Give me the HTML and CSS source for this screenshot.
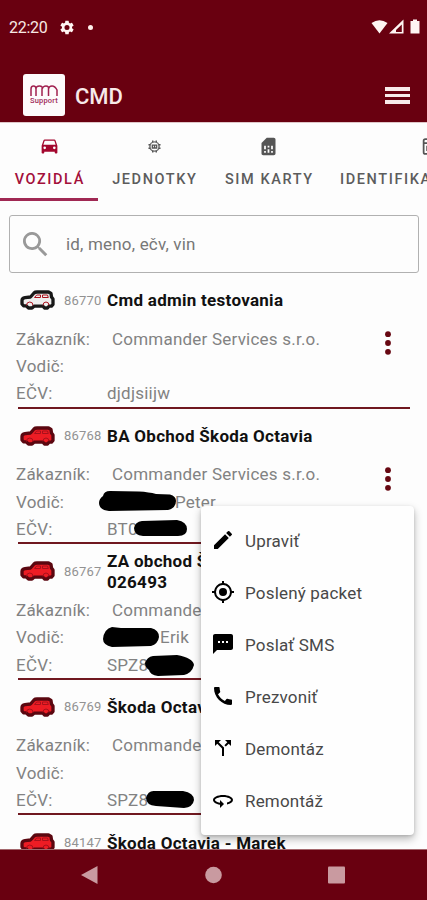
FILE: index.html
```html
<!DOCTYPE html>
<html lang="sk">
<head>
<meta charset="utf-8">
<title>CMD</title>
<link rel="stylesheet" href="styles.css">
</head>
<body>
<svg class="defs" width="0" height="0">
  <symbol id="car" viewBox="0 0 35 20">
    <path d="M2 10.500Q2 8.200 5 7.700L10.500 7 14 3Q15 2 17 2H28.500L31 3.500 31.500 7 33 9V14.500L31.500 16.200H29L27.500 18H24.500L23 16.200H14L12 18H8.500L6 15.800H3.500L2 14Z" stroke-width="3.300" stroke-linejoin="round"/>
    <path class="detail" d="M14.500 7.500 16.700 5H20.500V7.500ZM22.500 5H27.500L28.300 7.500H22.500ZM6.500 15.500Q6.500 12 9.800 12T13 15.500M23 15.500Q23 12 26 12T29 15.500" fill="none" stroke-width="1"/>
  </symbol>
  <symbol id="dots" viewBox="0 0 8 26"><circle cx="4" cy="4.200" r="2.900"/><circle cx="4" cy="13" r="2.900"/><circle cx="4" cy="21.800" r="2.900"/></symbol>
</svg>
<div class="screen">
  <div class="status">
    <span class="clock">22:20</span>
    <svg class="gear" viewBox="2 2 20 20"><path fill-rule="evenodd" d="M19.140 12.940c.040-.300.060-.610.060-.940s-.020-.640-.070-.940l2.030-1.580a.49.49 0 0 0 .120-.610l-1.920-3.320a.49.49 0 0 0-.590-.220l-2.390.960a7 7 0 0 0-1.620-.940l-.360-2.540a.48.48 0 0 0-.480-.410h-3.840c-.240 0-.430.170-.470.410l-.360 2.540c-.590.240-1.130.570-1.620.940l-2.390-.960a.48.48 0 0 0-.590.220L2.740 8.870c-.120.210-.080.470.120.610l2.030 1.580c-.050.300-.090.630-.090.940s.020.640.070.940l-2.030 1.580a.49.49 0 0 0-.120.610l1.920 3.320c.120.220.370.290.590.220l2.390-.960c.500.380 1.030.700 1.620.940l.360 2.540c.050.240.240.410.480.410h3.840c.240 0 .440-.170.470-.410l.360-2.540a7 7 0 0 0 1.620-.940l2.390.960c.220.080.470 0 .590-.220l1.920-3.320a.49.49 0 0 0-.120-.610zM12 15.600a3.600 3.600 0 1 1 0-7.200 3.600 3.600 0 0 1 0 7.200z"/></svg>
    <i class="dot"></i>
    <svg class="signals" viewBox="0 0 50 16"><path d="M.5 4Q8.500 -1.500 16.500 4L8.500 14.500Z"/><path fill-rule="evenodd" d="M18 14.500 32.500 .500V14.500ZM25 13H30.800V5.500L25 11Z"/><path d="M39.500 2H42V.500H46V2H48.500V14.500H39.500Z"/></svg>
  </div>
  <header class="bar">
    <div class="logo">
      <svg viewBox="0 0 30 13"><path d="M2 12V5Q2 2 4.500 2T7 5V12M7 5Q7 2 10.500 2T13 5V12M13 5Q14 2 17 2T19.500 5V12M19.500 5Q20 2 23 2T28 6V12"/></svg>
      <span>Support</span>
    </div>
    <h1>CMD</h1>
    <div class="burger"><i></i><i></i><i></i></div>
  </header>
  <nav class="tabs">
    <div class="tab active"><svg viewBox="0 0 24 24"><path fill-rule="evenodd" d="M18.920 5.010C18.720 4.420 18.160 4 17.500 4h-11c-.660 0-1.210.420-1.420 1.010L3 11v8c0 .550.450 1 1 1h1c.550 0 1-.450 1-1v-1h12v1c0 .550.450 1 1 1h1c.550 0 1-.450 1-1v-8zM6.500 15a1.500 1.500 0 1 1 0-3 1.500 1.500 0 0 1 0 3zm11 0a1.500 1.500 0 1 1 0-3 1.500 1.500 0 0 1 0 3zM5 10l1.500-4.500h11L19 10z"/></svg><span>VOZIDLÁ</span></div>
    <div class="tab units"><svg viewBox="0 0 24 24"><circle cx="12" cy="12" r="6.500" fill="none" stroke="#666" stroke-width="2"/><path d="M8.500 3.500h2V6h-2zm5 0h2V6h-2zM8.500 18h2v2.500h-2zm5 0h2v2.500h-2zM3.500 8.500H6v2H3.500zm0 5H6v2H3.500zM18 8.500h2.500v2H18zm0 5h2.500v2H18z"/><path fill-rule="evenodd" d="M8 9h8v6H8zM10 10.800v2.400h1.200v-2.400zm3 0v2.400h1.200v-2.400z"/></svg><span>JEDNOTKY</span></div>
    <div class="tab sim"><svg viewBox="0 0 24 24"><path fill-rule="evenodd" d="M18 2h-8L4 8v12c0 1.100.900 2 2 2h12c1.100 0 2-.900 2-2V4c0-1.100-.900-2-2-2zM7 11h2v4H7zm0 6h2v2H7zm4-6h2v2h-2zm0 4h2v4h-2zm4-4h2v4h-2zm0 6h2v2h-2z"/></svg><span>SIM KARTY</span></div>
    <div class="tab ids"><svg viewBox="0 0 24 24"><path d="M5 3.500h14q2 0 2 2v13q0 2-2 2H5q-2 0-2-2v-13q0-2 2-2zM3 8h18M7 12h5v4H7z" fill="none" stroke="#555" stroke-width="2"/></svg><span>IDENTIFIKAČNÉ</span></div>
  </nav>
  <div class="search"><svg viewBox="3 3 18 18"><path d="M15.500 14h-.790l-.280-.270A6.500 6.500 0 1 0 13.730 14.430l.270.280v.790l5 4.990L20.490 19zm-6 0a4.500 4.500 0 1 1 0-9 4.500 4.500 0 0 1 0 9z"/></svg><span>id, meno, ečv, vin</span></div>
  <main class="list">
    <section class="record">
      <div class="head"><svg class="car idle"><use href="#car"/></svg><span class="num">86770</span><b>Cmd admin testovania</b></div>
      <div class="row"><span>Zákazník:</span><span class="customer">Commander Services s.r.o.</span><svg class="more"><use href="#dots"/></svg></div>
      <div class="row"><span>Vodič:</span></div>
      <div class="row"><span>EČV:</span><span>djdjsiijw</span></div>
    </section>
    <section class="record">
      <div class="head"><svg class="car"><use href="#car"/></svg><span class="num">86768</span><b>BA Obchod Škoda Octavia</b></div>
      <div class="row"><span>Zákazník:</span><span class="customer">Commander Services s.r.o.</span><svg class="more"><use href="#dots"/></svg></div>
      <div class="row"><span>Vodič:</span><svg class="ink driver" viewBox="0 0 77 20"><path d="M4 5Q5 0 11 0L40 .500Q50 1 57 3L71 3.500Q77 5 77 10Q77 17 69 19L10 20Q0 19 0 12Q0 8 4 5Z"/></svg><span>Peter</span></div>
      <div class="row"><span>EČV:</span><span>BT0</span><svg class="ink plate-a" viewBox="0 0 53 16"><path d="M8 1 43 0Q53 2 53 9Q53 16 44 16H9Q0 15 0 8Q1 2 8 1Z"/></svg></div>
    </section>
    <section class="record">
      <div class="head"><svg class="car"><use href="#car"/></svg><span class="num">86767</span><b>ZA obchod Škoda<br>026493</b></div>
      <div class="row"><span>Zákazník:</span><span class="customer">Commander</span></div>
      <div class="row"><span>Vodič:</span><svg class="ink driver-b" viewBox="0 0 56 20"><path d="M9 0 18 1H48Q56 3 56 10Q55 17 48 19L9 20Q0 18 0 12Q1 2 9 0Z"/></svg><span>Erik</span></div>
      <div class="row"><span>EČV:</span><span>SPZ8</span><svg class="ink plate-b" viewBox="0 0 49 21"><path d="M8 1 32 0Q48 3 49 10Q47 18 39 20L13 21Q5 20 4 15Q0 12 0 8Q2 2 8 1Z"/></svg></div>
    </section>
    <section class="record">
      <div class="head"><svg class="car"><use href="#car"/></svg><span class="num">86769</span><b>Škoda Octavia</b></div>
      <div class="row"><span>Zákazník:</span><span class="customer">Commander</span></div>
      <div class="row"><span>Vodič:</span></div>
      <div class="row"><span>EČV:</span><span>SPZ8</span><svg class="ink plate-c" viewBox="0 0 48 18"><path d="M9 1 37 1Q48 3 48 10Q47 17 38 18L10 16Q0 15 0 8Q2 0 9 1Z"/></svg></div>
    </section>
    <section class="record">
      <div class="head"><svg class="car"><use href="#car"/></svg><span class="num">84147</span><b>Škoda Octavia - Marek</b></div>
    </section>
  </main>
  <footer class="nav"><svg viewBox="0 0 17 20"><path d="M0 10 16.500 1V19Z"/></svg><svg viewBox="0 0 17 20"><circle cx="8.500" cy="10" r="8.300"/></svg><svg viewBox="0 0 17 20"><rect y="1.500" width="17" height="17" rx="1"/></svg></footer>
  <div class="menu">
    <div class="item"><svg viewBox="0 0 24 24"><path d="M3 17.250V21h3.750L17.810 9.940l-3.750-3.750zM20.710 7.040a1 1 0 0 0 0-1.410l-2.340-2.340a1 1 0 0 0-1.410 0l-1.830 1.830 3.750 3.750z"/></svg><span>Upraviť</span></div>
    <div class="item"><svg viewBox="0 0 24 24"><path fill-rule="evenodd" d="M12 8a4 4 0 1 0 0 8 4 4 0 0 0 0-8zm8.940 3A8.990 8.990 0 0 0 13 3.060V1h-2v2.060A8.990 8.990 0 0 0 3.060 11H1v2h2.060A8.990 8.990 0 0 0 11 20.940V23h2v-2.060A8.990 8.990 0 0 0 20.940 13H23v-2zM12 19a7 7 0 1 1 0-14 7 7 0 0 1 0 14z"/></svg><span>Poslený packet</span></div>
    <div class="item"><svg viewBox="0 0 24 24"><path fill-rule="evenodd" d="M20 2H4c-1.100 0-2 .900-2 2v18l4-4h14c1.100 0 2-.900 2-2V4c0-1.100-.900-2-2-2zM9 11H7V9h2zm4 0h-2V9h2zm4 0h-2V9h2z"/></svg><span>Poslať SMS</span></div>
    <div class="item"><svg viewBox="0 0 24 24"><path d="M20.010 15.380c-1.230 0-2.420-.200-3.530-.560a.98.98 0 0 0-1.010.240l-1.570 1.970c-2.830-1.350-5.480-3.900-6.890-6.830l1.950-1.660c.270-.280.350-.670.240-1.020-.370-1.110-.560-2.300-.560-3.530 0-.540-.450-.990-.990-.990H4.190C3.650 3 3 3.240 3 3.990 3 13.280 10.730 21 20.010 21c.710 0 .990-.630.990-1.180v-3.450c0-.540-.450-.990-.990-.990z"/></svg><span>Prezvoniť</span></div>
    <div class="item"><svg viewBox="0 0 24 24"><path d="m14 4 2.290 2.290-2.880 2.880 1.420 1.420 2.880-2.880L20 10V4zm-4 0H4v6l2.290-2.290 4.710 4.700V20h2v-8.410l-5.290-5.300z"/></svg><span>Demontáz</span></div>
    <div class="item"><svg viewBox="0 0 24 24"><path d="M12 7C6.480 7 2 9.240 2 12c0 2.240 2.940 4.130 7 4.770V20l4-4-4-4v2.730c-3.150-.560-5-1.900-5-2.730 0-1.060 3.040-3 8-3s8 1.940 8 3c0 .730-1.460 1.890-4 2.530v2.050c3.530-.770 6-2.530 6-4.580 0-2.760-4.480-5-10-5z"/></svg><span>Remontáž</span></div>
  </div>
</div>
</body>
</html>
```
FILE: styles.css
```css
* { box-sizing: border-box; }
body { margin: 0; font-family: Roboto, "Liberation Sans", sans-serif; background: #fdfdfd; }
svg { display: block; flex: none; }
.defs { position: absolute; }
.screen { position: relative; display: flex; flex-direction: column; width: 427px; height: 900px; overflow: hidden; background: #fdfdfd; }
.status { display: flex; align-items: center; flex: none; height: 54px; padding: 0 6px 0 9px; background: #690010; color: #f8e9e5; fill: #fff5f3; }
.clock { width: 51px; font-size: 16px; letter-spacing: -.3px; padding-top: 1px; }
.gear { width: 14px; height: 15px; }
.dot { width: 5px; height: 5px; margin-left: 14px; border-radius: 50%; background: #fff0ec; }
.signals { width: 50px; height: 16px; margin-left: auto; }
.bar { display: flex; align-items: center; flex: none; height: 68px; padding: 16px 17px 0 23px; background: #690010; color: #f8e9e9; }
.logo { width: 42px; height: 42px; margin-bottom: 2px; border-radius: 3px; background: #fdfafb; color: #a12b5a; text-align: center; padding-top: 10px; }
.logo svg { width: 30px; height: 13px; margin: 0 auto; fill: none; stroke: #a1204f; stroke-width: 1.5; }
.logo span { display: block; font-size: 7.500px; font-weight: 500; line-height: 7px; letter-spacing: .2px; }
.bar h1 { margin: 2px 0 0 10px; font-size: 22px; font-weight: 500; line-height: 26px; }
.burger { display: flex; flex-direction: column; gap: 3px; width: 25px; margin: 0 0 1px auto; }
.burger i { height: 3.500px; background: #f8eaea; }
.tabs { display: flex; flex: none; height: 79px; overflow: hidden; color: #5c5c5c; fill: #555; border-top: 1px solid #dfc6c8; }
.tab { display: flex; flex: none; flex-direction: column; align-items: center; gap: 13px; width: 98px; padding-top: 13px; font-size: 14.500px; font-weight: 500; line-height: 19px; letter-spacing: 1.600px; white-space: nowrap; }
.tab svg { width: 21px; height: 21px; }
.tab span { margin-right: -1.600px; }
.tab.active { color: #a30f3a; fill: #a3072e; border-bottom: 3px solid #a02853; }
.tab.units { width: 112px; }
.units svg { width: 17px; height: 21px; }
.tab.sim { width: 117px; }
.tab.ids { width: 190px; align-items: flex-start; padding-left: 13px; }
.tab.ids svg { margin-left: 81px; }
.search { display: flex; align-items: center; flex: none; width: 410px; height: 58px; margin: 14px 0 0 9px; padding-left: 13px; border: 1px solid #b1b1b1; border-radius: 3px; color: #777; font-size: 17px; letter-spacing: .18px; }
.search svg { width: 25px; height: 25px; margin-right: 18px; fill: #999; }
.list { flex: 1; min-height: 0; overflow: hidden; }
.record { height: 135.600px; margin-left: 16px; color: #828282; font-size: 17px; letter-spacing: .22px; background: linear-gradient(#701820, #701820) 2px 100% / 392px 2px no-repeat; }
.head { display: flex; align-items: center; height: 52.400px; padding: 2px 0 0 4px; }
.car { width: 35px; height: 20px; fill: #ed1c24; stroke: #5b0710; }
.car.idle { fill: #eee; stroke: #181818; }
.detail { stroke: #a8101b; }
.idle .detail { stroke: #777; }
.num { width: 44px; margin-left: 9px; margin-right: -1px; font-size: 13px; letter-spacing: .2px; color: #929292; }
.head b { padding-top: 1px; color: #111; font-size: 17px; font-weight: 700; line-height: 20.500px; letter-spacing: .28px; white-space: nowrap; }
.row { display: flex; align-items: center; position: relative; height: 27.400px; white-space: nowrap; }
.row > span { margin-top: -1px; }
.row > span:first-child { width: 91px; }
.row .customer { margin-left: 5px; }
.more { position: absolute; left: 368px; top: 5px; width: 8px; height: 26px; fill: #670812; }
.ink { position: relative; fill: #000; }
.driver { width: 77px; height: 20px; margin: -2px -1px 0 -8px; }
.driver-b { width: 56px; height: 20px; margin: -2px 1px 0 -4px; }
.plate-a { position: absolute; left: 118px; top: 4px; width: 53px; height: 16px; }
.plate-b { position: absolute; left: 129px; top: 4px; width: 49px; height: 21px; }
.plate-c { position: absolute; left: 130px; top: 3px; width: 48px; height: 18px; }
.nav { display: flex; align-items: center; justify-content: center; flex: none; gap: 106.500px; height: 51px; padding-right: 1px; background: #690010; fill: #c99aa0; border-top: 1px solid #a4686d; }
.nav svg { width: 17px; height: 20px; }
.menu { position: absolute; left: 201px; top: 506px; width: 213px; height: 329px; padding: 9px 0; border-radius: 4px; background: #fefefe; box-shadow: 0 4px 8px rgba(0,0,0,.28), 0 1px 3px rgba(0,0,0,.12); }
.item { display: flex; align-items: center; gap: 10px; height: 52px; padding-left: 10px; color: #484848; font-size: 17px; letter-spacing: .18px; }
.item svg { width: 24px; height: 24px; position: relative; top: -1px; }
```
